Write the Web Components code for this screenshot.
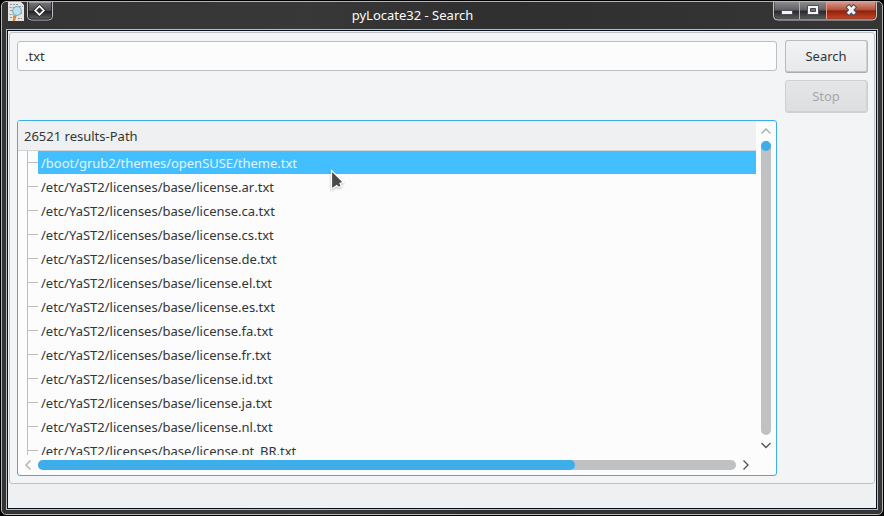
<!DOCTYPE html>
<html lang="en">
<head>
<meta charset="utf-8">
<title>pyLocate32 - Search</title>
<style>
html,body{margin:0;padding:0;background:#000;overflow:hidden}
body{width:884px;height:516px;font:13px/24px "Noto Sans",sans-serif;color:#31363b}
.nk{font-kerning:none}
</style>
</head>
<body>
<app-window>
  <title-bar slot="title">pyLocate32 - Search</title-bar>
  <search-input>.txt</search-input>
  <push-button slot="side">Search</push-button>
  <push-button slot="side" disabled>Stop</push-button>
  <result-tree>
    <span slot="header">26521 results-Path</span>
    <tree-row selected>/boot/grub2/themes/openSUSE/theme.txt</tree-row>
    <tree-row>/etc/YaST2/licenses/base/license.a<span class="nk">r</span>.txt</tree-row>
    <tree-row>/etc/YaST2/licenses/base/license.ca.txt</tree-row>
    <tree-row>/etc/YaST2/licenses/base/license.cs.txt</tree-row>
    <tree-row>/etc/YaST2/licenses/base/license.de.txt</tree-row>
    <tree-row>/etc/YaST2/licenses/base/license.el.txt</tree-row>
    <tree-row>/etc/YaST2/licenses/base/license.es.txt</tree-row>
    <tree-row>/etc/YaST2/licenses/base/license.fa.txt</tree-row>
    <tree-row>/etc/YaST2/licenses/base/license.f<span class="nk">r</span>.txt</tree-row>
    <tree-row>/etc/YaST2/licenses/base/license.id.txt</tree-row>
    <tree-row>/etc/YaST2/licenses/base/license.ja.txt</tree-row>
    <tree-row>/etc/YaST2/licenses/base/license.nl.txt</tree-row>
    <tree-row>/etc/YaST2/licenses/base/license.pt_BR.txt</tree-row>
  </result-tree>
</app-window>
<mouse-pointer></mouse-pointer>
<script>
const define = (name, html) => {
  const t = document.createElement('template');
  t.innerHTML = '<style>*{box-sizing:border-box}:host{box-sizing:border-box}</style>' + html;
  customElements.define(name, class extends HTMLElement {
    constructor() {
      super();
      this.attachShadow({ mode: 'open' }).append(t.content.cloneNode(true));
    }
  });
};

define('app-window', `
<style>
:host{display:block;width:884px;height:516px;padding:1px;background:#000}
.frame{display:flex;flex-direction:column;width:882px;height:514px;border:1px solid #b5b5b8;border-radius:5px;padding:0 4px 4px;background:linear-gradient(90deg,#343434,#383838 35%,#2f2f2f 55%,#363636)}
.client{flex:1;border:1px solid #b9bcc2;background:#04101f;padding:1px}
.inner{height:100%;background:#eff0f1;padding:1px}
.group{display:grid;grid-template-columns:760px 83px;column-gap:8px;height:452px;border:1px solid #bfc1c4;border-radius:3px;background:#f3f4f6;padding:7px 0 0 7px;align-content:start}
.main{display:flex;flex-direction:column;gap:49px;padding-top:1px}
.side{display:flex;flex-direction:column;gap:7px}
</style>
<div class="frame"><slot name="title"></slot>
<div class="client"><div class="inner"><div class="group">
<div class="main"><slot></slot></div><div class="side"><slot name="side"></slot></div>
</div></div></div></div>`);

define('title-bar', `
<style>
:host{display:grid;grid-template-columns:62px 1fr 120px;height:27px;color:#fcfcfc}
.left,.right{display:flex;align-items:flex-start}
.right{justify-content:flex-end}
.title{text-align:center;line-height:26px;padding-right:1px}
svg{display:block}
</style>
<div class="left">
<svg width="50" height="20" viewBox="6 2 50 20">
 <defs><linearGradient id="m" x2="0" y2="1"><stop stop-color="#77777a"/><stop offset=".48" stop-color="#4c4c50"/><stop offset=".52" stop-color="#222226"/><stop offset="1" stop-color="#66666b"/></linearGradient></defs>
 <path d="M8 2h13l3 3v16H8z" fill="#e6e4e3"/>
 <path d="M10 4.500h8M9.500 7.500h5M10 10.500h3M9.500 14.500h4M10 17.500h4M18 18.500h4M20 13.500h3M19 6.500h4" stroke="#9a9295" stroke-width="1" stroke-dasharray="2 1"/>
 <circle cx="17" cy="11" r="4.300" fill="#b9e2ec" stroke="#85b5c8" stroke-width="1.300"/>
 <path d="M15.500 15.500l-1.800 5.500" stroke="#e08422" stroke-width="2.200"/>
 <path d="M14.300 15l-1 3" stroke="#5c9dc0"/>
 <path d="M27.500 2v14q0 4 4 4h17q4 0 4-4V2z" fill="url(#m)" stroke="#bcbcc0"/>
 <path d="M28.500 2v14q0 3 3 3h17q3 0 3-3V2" fill="none" stroke="#29292c"/>
 <path d="M39.500 6.200l4.300 4.300-4.300 4.300-4.300-4.300z" fill="#29292c" stroke="#26262c" stroke-width="3.600"/>
 <path d="M39.500 6.200l4.300 4.300-4.300 4.300-4.300-4.300z" fill="#303034" stroke="#fff" stroke-width="1.700"/>
</svg></div>
<div class="title"><slot></slot></div>
<div class="right">
<svg width="106" height="19" viewBox="772 2 106 19">
 <defs>
 <linearGradient id="g" x2="0" y2="1"><stop stop-color="#8b8b8d"/><stop offset=".45" stop-color="#606062"/><stop offset=".5" stop-color="#28282b"/><stop offset="1" stop-color="#626266"/></linearGradient>
 <linearGradient id="r" x2="0" y2="1"><stop stop-color="#d39b8e"/><stop offset=".42" stop-color="#b9533e"/><stop offset=".5" stop-color="#8f210c"/><stop offset="1" stop-color="#cf4b29"/></linearGradient>
 </defs>
 <path d="M773.500 2v14q0 4 4 4h95q4 0 4-4V2z" fill="url(#g)"/>
 <path d="M827 2v18h45.500q4 0 4-4V2z" fill="url(#r)"/>
 <path d="M774.500 2v14q0 3 3 3h94.500q3.500 0 3.500-3V2" fill="none" stroke="#303033" stroke-opacity=".5"/>
 <path d="M773.500 2v14q0 4 4 4h95q4 0 4-4V2" fill="none" stroke="#c4c4c7"/>
 <path d="M799.500 2v17" stroke="#b4b4b7"/><path d="M826.500 2v17" stroke="#e49b88"/>
 <rect x="781.500" y="10.500" width="11" height="4" fill="#f4f4f4" stroke="#50505a"/>
 <path d="M807.500 5.500h11v9h-11z" fill="#f4f4f4" stroke="#50505a"/>
 <path d="M810.500 8.500h5v3h-5z" fill="#737376" stroke="#44444d"/>
 <path d="M847.300 5.500l8 9M855.300 5.500l-8 9" stroke="#4c4c5a" stroke-width="5"/>
 <path d="M848 6.200l6.600 7.600M854.600 6.200l-6.600 7.600" stroke="#f4f4f4" stroke-width="3"/>
</svg></div>`);

define('search-input', `
<style>:host{display:block;height:30px;border:1px solid #bcbec0;border-radius:3px;background:#fcfcfc;padding-left:7px;line-height:29px}</style><slot></slot>`);

define('push-button', `
<style>
:host{display:block;height:33px;text-align:center;line-height:31px;border:1px solid #b8babc;border-bottom-color:#a9abad;border-radius:3px;background:linear-gradient(#f2f3f4,#e8e9ea);box-shadow:inset 0 -1px #c3c5c7,inset -1px 0 #d0d1d3;padding-right:1px}
:host([disabled]){color:#a5a8aa;border-color:#cfd0d2;background:linear-gradient(#e5e6e8,#dddee0);box-shadow:inset 0 -1px #d0d1d3,inset -1px 0 #d3d4d6}
</style><slot></slot>`);

define('tree-row', `
<style>
:host{display:flex;height:24px;flex:none;padding-left:9px;white-space:nowrap}
.branch{width:11px;border-left:1px solid #bcbec0;background:linear-gradient(#bcbec0,#bcbec0) 0 11px/10px 1px no-repeat}
.cell{flex:1;height:23px;padding-left:3px;line-height:24px}
:host([selected]) .cell{background:#43bfff;color:#e4f4fd;letter-spacing:-.02px}
</style><div class="branch"></div><div class="cell"><slot></slot></div>`);

define('scroll-bar', `
<style>
:host{display:flex;align-items:center;gap:4px}
:host([vertical]){flex-direction:column}
svg{width:12px;height:12px;flex:none;fill:none;stroke:#4d5156;stroke-width:1.300}
.off{stroke:#a9abad}
.track{flex:1;height:10px;border-radius:5px;background:#c0c1c3}
.thumb{height:10px;width:537px;border-radius:5px;background:#3daee9}
:host([vertical]) .track{width:10px;height:auto}
:host([vertical]) .thumb{width:10px}
:host(:not([vertical])) .v,:host([vertical]) .h{display:none}
</style>
<svg class="off h"><path d="M8.500 1.500L4 6 8.500 10.500"/></svg>
<svg class="off v"><path d="M1.500 8.500L6 4 10.500 8.500"/></svg>
<div class="track"><div class="thumb"></div></div>
<svg class="h"><path d="M3.500 1.500L8 6 3.500 10.500"/></svg>
<svg class="v"><path d="M1.500 4L6 8.500 10.500 4"/></svg>`);

define('result-tree', `
<style>
:host{display:grid;grid-template:334px 20px / 738px 20px;width:760px;height:356px;border:1px solid #3daee9;border-radius:3px;background:#fcfcfc}
.view{display:flex;flex-direction:column;overflow:hidden}
.head{height:30px;flex:none;padding-left:6px;line-height:30px;background:#eff0f1;border-bottom:1px solid #d5d6d8;border-radius:2px 0 0}
.vs{padding:4px 0 3px 5px}
scroll-bar[vertical]{width:10px;height:326px}
.hs{padding:5px 0 0 4px}
scroll-bar:not([vertical]){width:730px;height:10px}
</style>
<div class="view"><div class="head"><slot name="header"></slot></div><slot></slot></div>
<div class="vs"><scroll-bar vertical></scroll-bar></div>
<div class="hs"><scroll-bar></scroll-bar></div>`);

define('mouse-pointer', `
<style>:host{position:absolute;left:329px;top:168px;width:18px;height:27px}svg{display:block;filter:drop-shadow(0 1px 1px #0004)}</style>
<svg width="18" height="27"><path d="M2.500 2.500l11.800 11.700-3.300 1.200 1.300 3-2.500 1-2-1.800-5.300 3.400z" fill="#4a4a4a" stroke="#fff" stroke-width="1.200"/></svg>`);
</script>
</body>
</html>
